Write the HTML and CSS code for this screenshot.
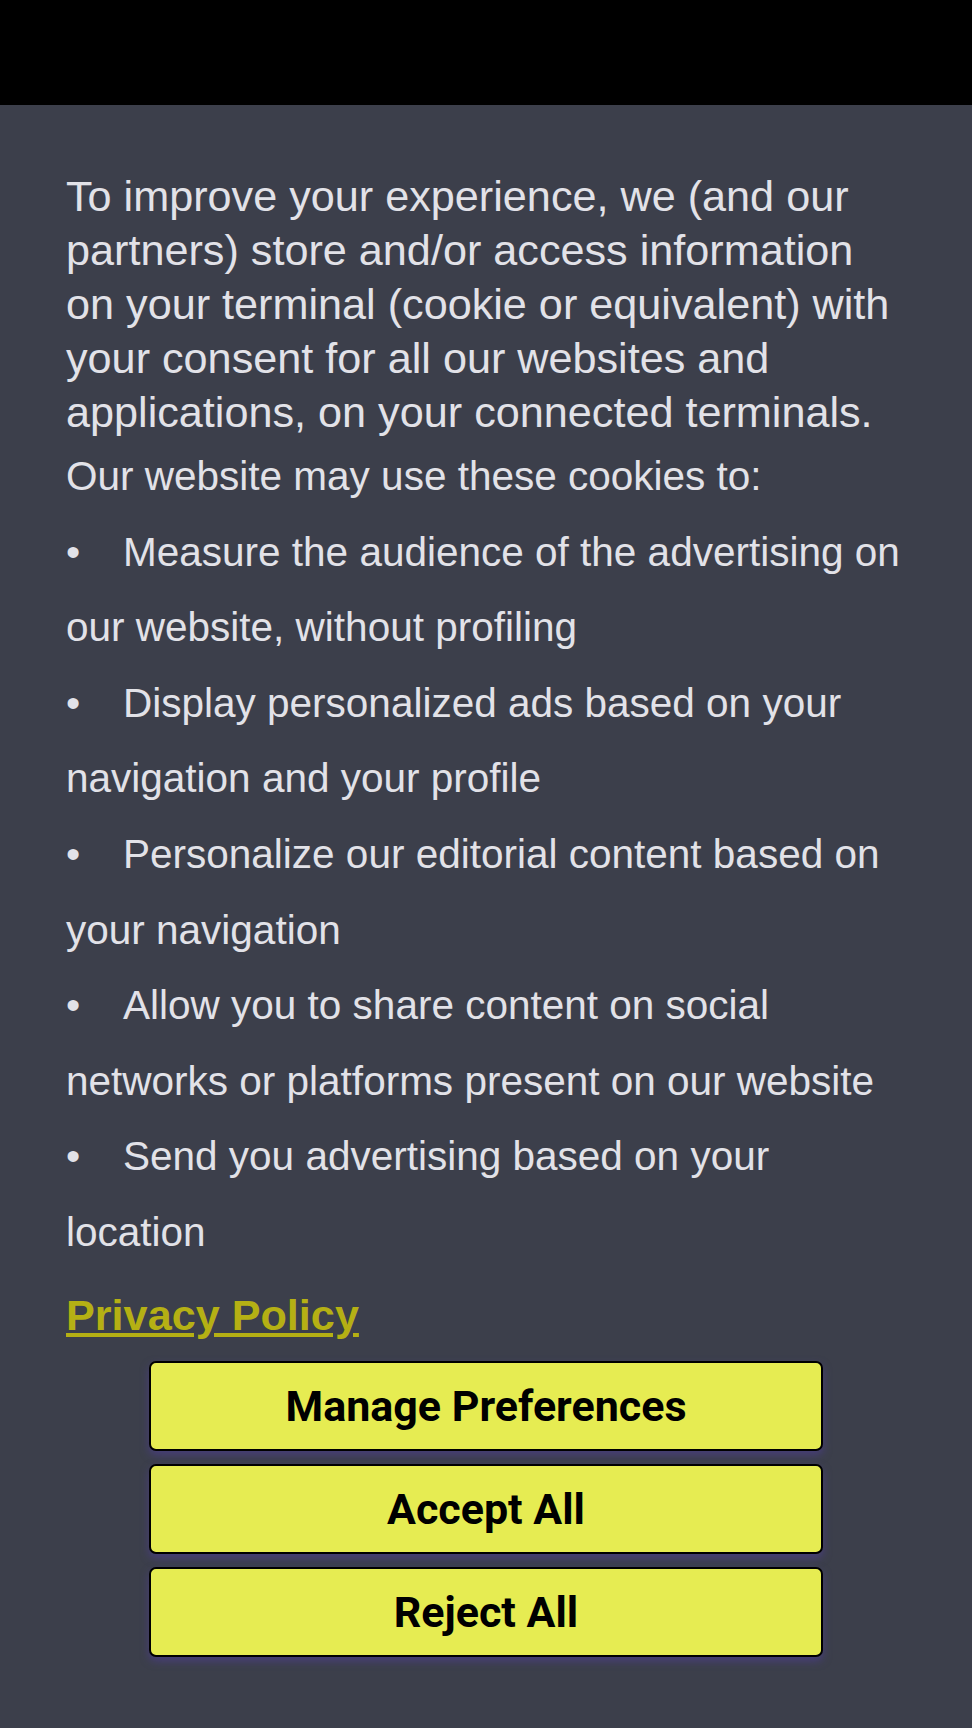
FILE: index.html
```html
<!DOCTYPE html>
<html lang="en">
<head>
    <meta charset="UTF-8">
    <meta name="viewport" content="width=device-width, initial-scale=1.0">
    <title>Cookie Consent</title>
    <link rel="stylesheet" href="styles.css">
</head>
<body>
    <div class="topbar"></div>

    <div class="consent">
        <p class="intro">To improve your experience, we (and our partners) store and/or access information on your terminal (cookie or equivalent) with your consent for all our websites and applications, on your connected terminals.</p>

        <div class="purposes">
            <p>Our website may use these cookies to:</p>
            <ul>
                <li>Measure the audience of the advertising on our website, without profiling</li>
                <li>Display personalized ads based on your navigation and your profile</li>
                <li>Personalize our editorial content based on your navigation</li>
                <li>Allow you to share content on social networks or platforms present on our website</li>
                <li>Send you advertising based on your location</li>
            </ul>
        </div>

        <a class="policy" href="#">Privacy Policy</a>

        <div class="actions">
            <button type="button">Manage Preferences</button>
            <button type="button">Accept All</button>
            <button type="button">Reject All</button>
        </div>
    </div>
</body>
</html>
```

FILE: styles.css
```css
body {
    margin: 0;
    background-color: #3c3f4b;
    font-family: "Liberation Sans", Arial, sans-serif;
    color: #e2e2e8;
    min-height: 1728px;
}
.topbar {
    height: 105px;
    background-color: #000;
}
.consent {
    padding: 64px 66px 40px 66px;
}
.intro {
    margin: 0;
    font-size: 43.2px;
    line-height: 54px;
}
.purposes {
    font-size: 40.5px;
    line-height: 75.6px;
}
.purposes p {
    margin: 0;
}
.purposes ul {
    list-style: none;
    margin: 0;
    padding: 0;
}
.purposes li::before {
    content: "\2022";
    display: inline-block;
    width: 57px;
}
.policy {
    display: block;
    margin-top: 20px;
    font-size: 43.2px;
    font-weight: bold;
    color: #b5b014;
}
.actions {
    display: flex;
    flex-direction: column;
    align-items: center;
    gap: 13px;
    margin-top: 21px;
}
.actions button {
    width: 674px;
    height: 90px;
    background-color: #e6ec52;
    border: 2px solid #000;
    border-radius: 7px;
    box-shadow: 0 4px 8px rgba(80, 60, 160, 0.55);
    font-family: Roboto, "Liberation Sans", sans-serif;
    font-size: 43px;
    font-weight: bold;
    color: #000;
    cursor: pointer;
}
```
